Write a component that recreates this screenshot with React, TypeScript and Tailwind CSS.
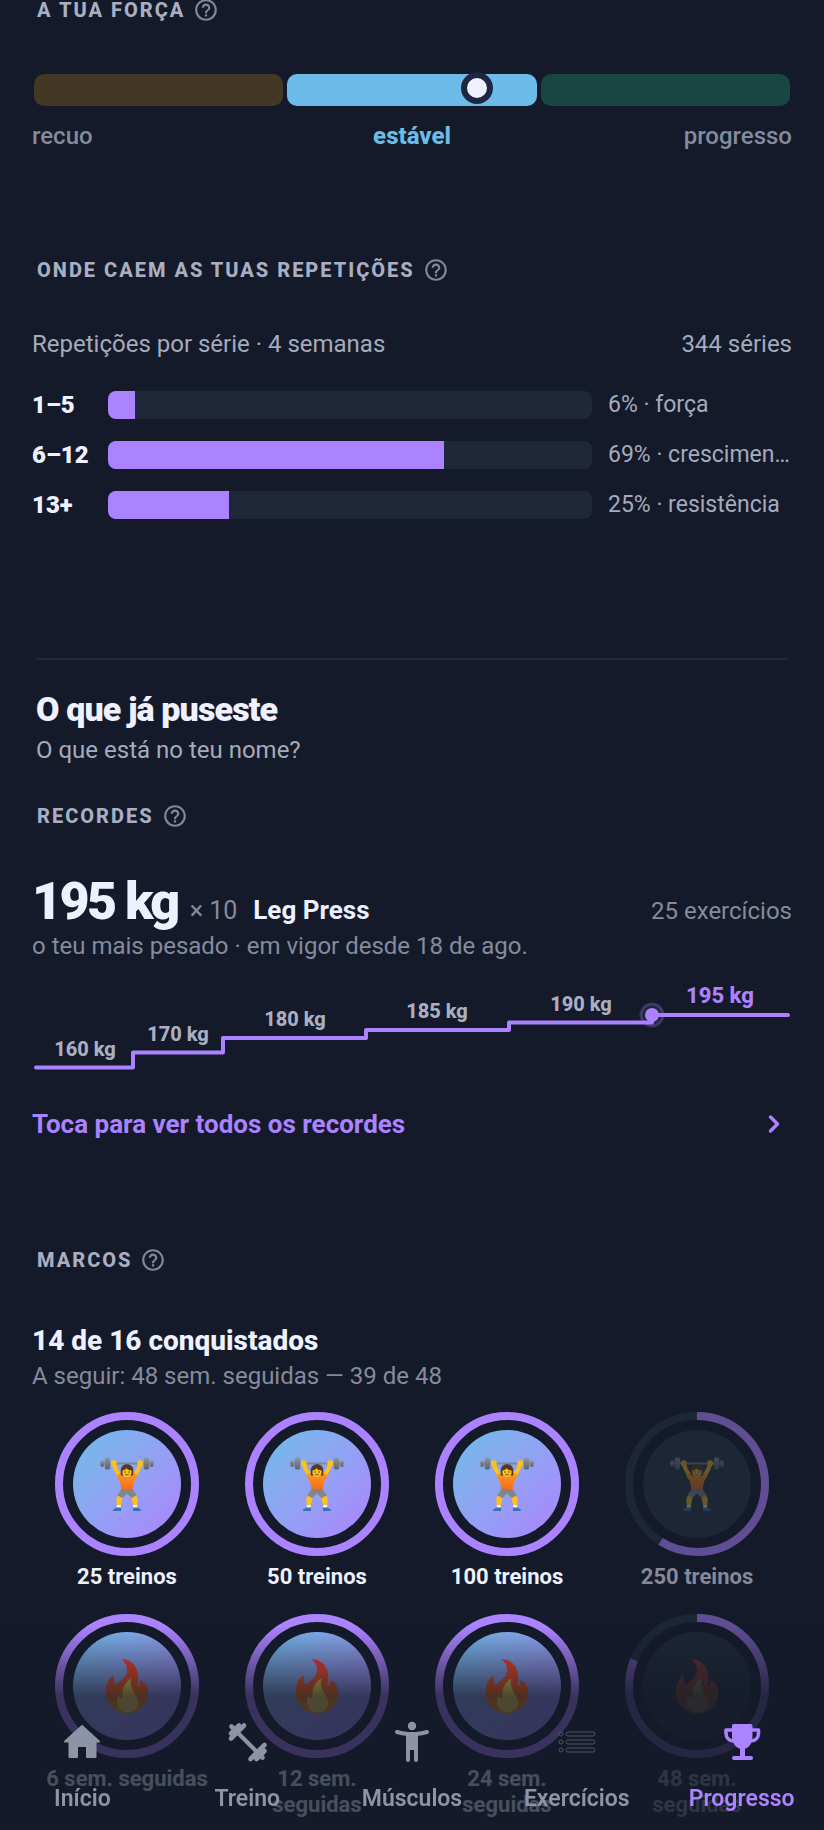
import React from 'react';
import { MdHelpOutline } from 'react-icons/md';
import { ChevronRight } from 'lucide-react';

type BadgeKind = 'lifter' | 'fire';

interface Badge {
  label: string;
  kind: BadgeKind;
  progress: number;
}

const REP_RANGES = [
  { range: '1–5', sets: 19, note: '6% · força' },
  { range: '6–12', sets: 239, note: '69% · crescimento' },
  { range: '13+', sets: 86, note: '25% · resistência' },
];

const TOTAL_SETS = 344;

const STEPS = [
  { label: '160 kg', x: 53, y: 76 },
  { label: '170 kg', x: 146, y: 61 },
  { label: '180 kg', x: 263, y: 46 },
  { label: '185 kg', x: 405, y: 38 },
  { label: '190 kg', x: 549, y: 31 },
];

const BADGES: Badge[] = [
  { label: '25 treinos', kind: 'lifter', progress: 1 },
  { label: '50 treinos', kind: 'lifter', progress: 1 },
  { label: '100 treinos', kind: 'lifter', progress: 1 },
  { label: '250 treinos', kind: 'lifter', progress: 0.59 },
  { label: '6 sem. seguidas', kind: 'fire', progress: 1 },
  { label: '12 sem. seguidas', kind: 'fire', progress: 1 },
  { label: '24 sem. seguidas', kind: 'fire', progress: 1 },
  { label: '48 sem. seguidas', kind: 'fire', progress: 39 / 48 },
];

const SectionLabel: React.FC<{ children: string }> = ({ children }) => (
  <div className="flex h-5 items-center gap-2 pl-[5px]">
    <h2 className="text-[20px] leading-5 font-extrabold tracking-widest text-[#a9afc1] uppercase">
      {children}
    </h2>
    <button type="button" aria-label="Ajuda" className="shrink-0 text-[#828899]">
      <MdHelpOutline size={26} />
    </button>
  </div>
);

const Lifter: React.FC = () => (
  <svg viewBox="0 0 54 54" className="size-[54px]" aria-hidden="true">
    <defs>
      <linearGradient id="shirt" x1="0" y1="0" x2="0" y2="1">
        <stop offset="0" stopColor="#ff9a1f" />
        <stop offset="1" stopColor="#f56a1c" />
      </linearGradient>
      <linearGradient id="plate" x1="0" y1="0" x2="0" y2="1">
        <stop offset="0" stopColor="#90979c" />
        <stop offset="1" stopColor="#5d6468" />
      </linearGradient>
    </defs>
    <path d="M1 6.6H53" stroke="#82898d" strokeWidth="2" strokeLinecap="round" />
    <g fill="url(#plate)">
      <rect x="0.5" y="3.4" width="3.4" height="6.6" rx="1.4" />
      <rect x="4.8" y="0.6" width="5.4" height="12" rx="2.2" />
      <rect x="50.1" y="3.4" width="3.4" height="6.6" rx="1.4" />
      <rect x="43.8" y="0.6" width="5.4" height="12" rx="2.2" />
    </g>
    <g fill="none" stroke="#fcc21b" strokeLinecap="round" strokeLinejoin="round">
      <path d="M14 7.5L15.6 12L20.5 20" strokeWidth="4.2" />
      <path d="M40 7.5L38.4 12L33.5 20" strokeWidth="4.2" />
    </g>
    <circle cx="13.8" cy="6.2" r="2.9" fill="#fcc21b" />
    <circle cx="40.2" cy="6.2" r="2.9" fill="#fcc21b" />
    <path
      d="M16 18.4L20.5 15.6L24 19.4H30L33.5 15.6L38 18.4L34 24.4L32.5 33H21.6L20 24.4Z"
      fill="url(#shirt)"
    />
    <path d="M20.8 18.4V13.2C20.8 9.4 23.4 7.2 27 7.2S33.2 9.4 33.2 13.2V18.4Z" fill="#543930" />
    <path
      d="M22.4 13.4C24.4 13.4 25.8 12.4 26.4 11.2C27.6 12.8 29.6 13.4 31.6 13.4V15.4C31.6 18.2 29.6 20 27 20S22.4 18.2 22.4 15.4Z"
      fill="#fcc21b"
    />
    <circle cx="25" cy="15" r="0.7" fill="#4a3a24" />
    <circle cx="29" cy="15" r="0.7" fill="#4a3a24" />
    <path d="M25.2 17.4Q27 18.6 28.8 17.4" stroke="#4a3a24" strokeWidth="0.8" fill="none" />
    <path d="M18.8 36.5L16.2 42L16.8 48.6H20.8L22.6 40.6L23.6 37.6Z" fill="#fcc21b" />
    <path d="M35.2 36.5L37.8 42L37.2 48.6H33.2L31.4 40.6L30.4 37.6Z" fill="#fcc21b" />
    <path d="M21.6 32H32.4L36.8 38.2L31.6 41L27 36.4L22.4 41L17.2 38.2Z" fill="#858585" />
    <path d="M16.8 48H20.8V51H16.8ZM33.2 48H37.2V51H33.2Z" fill="#f1f1f1" />
    <path
      d="M12.8 54C13 52 15.4 51.2 16.8 50.6H21V54ZM41.2 54C41 52 38.6 51.2 37.2 50.6H33V54Z"
      fill="#3f6fae"
    />
  </svg>
);

const Fire: React.FC = () => (
  <svg viewBox="0 0 54 54" className="size-[54px]" aria-hidden="true">
    <defs>
      <linearGradient id="flame" x1="0" y1="0" x2="0" y2="1">
        <stop offset="0" stopColor="#ff3a2e" />
        <stop offset="0.5" stopColor="#ff5a12" />
        <stop offset="1" stopColor="#ff9d00" />
      </linearGradient>
    </defs>
    <path
      d="M21.5 0.2C31 -0.4 39 8 38.3 19.5C38.2 22.5 37.2 25 37.8 27C39.6 27 40.8 24.6 39.4 21.4C45 21.6 48.4 27 48.2 33.5C48 46 38.6 54 27 54S5.8 46.5 5.8 33C5.8 26 8.2 19 14.2 16.2C13.6 19.2 13.4 22 15 25C17.4 25.4 20.4 22.6 24.4 18C28.8 12.8 27.6 4.4 21.5 0.2Z"
      fill="url(#flame)"
    />
    <path
      d="M31.2 19.4C26.4 22.2 20.6 28.4 22.8 39.4C21 39 19 38.4 17.8 36.6C16.4 40 16.8 45 18.4 48.4C20 51.6 23.4 53.2 27.4 53.2C33.6 53.2 38.2 49.4 38.2 43.6C38.2 36.4 29.2 32 31.2 19.4Z"
      fill="#fcd84a"
    />
  </svg>
);

const BadgeItem: React.FC<{ badge: Badge }> = ({ badge }) => {
  const done = badge.progress >= 1;
  return (
    <li className="flex flex-col items-center px-3">
      <div className={done ? 'relative size-36' : 'relative size-36 opacity-50'}>
        <svg viewBox="0 0 144 144" className="size-full -rotate-90" aria-hidden="true">
          <circle cx="72" cy="72" r="68" fill="none" stroke="#27323f" strokeWidth="8" />
          <circle
            cx="72"
            cy="72"
            r="68"
            fill="none"
            stroke="#ab82ff"
            strokeWidth="8"
            pathLength="100"
            strokeDasharray={`${badge.progress * 100} 100`}
          />
        </svg>
        <div
          className={
            done
              ? 'absolute inset-[18px] flex items-center justify-center rounded-full bg-linear-to-br from-[#6bbde8] to-[#ab82ff]'
              : 'absolute inset-[18px] flex items-center justify-center rounded-full bg-[#27323f]'
          }
        >
          <span className={done ? '' : 'opacity-70'}>
            {badge.kind === 'lifter' ? <Lifter /> : <Fire />}
          </span>
        </div>
      </div>
      <span
        className={
          done
            ? 'mt-2 text-center text-[22px] leading-[26px] font-bold text-[#eef1ff]'
            : 'mt-2 text-center text-[22px] leading-[26px] font-bold text-[#838999]'
        }
      >
        {badge.label}
      </span>
    </li>
  );
};

const HomeIcon: React.FC = () => (
  <svg viewBox="0 0 48 48" className="size-12" fill="currentColor" aria-hidden="true">
    <path
      d="M24 8L41 23.5H37.5V39H29V28H19V39H11.5V23.5H7Z"
      stroke="currentColor"
      strokeWidth="2"
      strokeLinejoin="round"
    />
  </svg>
);

const DumbbellIcon: React.FC = () => (
  <svg
    viewBox="0 0 48 48"
    className="size-12"
    fill="none"
    stroke="currentColor"
    strokeWidth="4"
    strokeLinecap="round"
    aria-hidden="true"
  >
    <path d="M14 14L34.5 34.5" />
    <path d="M8 20.5L21 7.5M8 15.5L16 7.5M8.5 8.5L12 12" strokeWidth="4.6" />
    <path d="M27.5 41L41.5 27M33.5 41L41.5 33M36 36L39.5 39.5" strokeWidth="4.6" />
  </svg>
);

const BodyIcon: React.FC = () => (
  <svg viewBox="0 0 48 48" className="size-12" fill="currentColor" aria-hidden="true">
    <circle cx="24" cy="8" r="4.2" />
    <path
      d="M9 14Q14 15.5 20 16V42M39 14Q34 15.5 28 16V42"
      fill="none"
      stroke="currentColor"
      strokeWidth="4"
      strokeLinecap="round"
      strokeLinejoin="round"
    />
    <path d="M18 14H30V32H18Z" />
  </svg>
);

const ListIcon: React.FC = () => (
  <svg viewBox="0 0 48 48" className="size-12 text-[#4d5464]" fill="none" stroke="currentColor" aria-hidden="true">
    {[16, 24, 32].map(y => (
      <g key={y}>
        <circle cx="8" cy={y} r="2" />
        <rect x="13" y={y - 2} width="29" height="4" rx="2" />
      </g>
    ))}
  </svg>
);

const TrophyIcon: React.FC = () => (
  <svg viewBox="0 0 48 48" className="size-12" fill="currentColor" aria-hidden="true">
    <path d="M15.5 6H32.5Q34.5 6 34.5 8V18C34.5 25 31 31 24.5 31S14 25 14 18V8Q14 6 15.5 6Z" />
    <path
      d="M14 12H8V15C8 19.5 11 23 16 23M34 12H40.5V15C40.5 19.5 37.5 23 32.5 23"
      fill="none"
      stroke="currentColor"
      strokeWidth="3.6"
      strokeLinejoin="round"
    />
    <rect x="22" y="29" width="5" height="11" />
    <rect x="14" y="38" width="21" height="4" rx="2" />
  </svg>
);

const NAV_ITEMS = [
  { label: 'Início', icon: <HomeIcon />, active: false },
  { label: 'Treino', icon: <DumbbellIcon />, active: false },
  { label: 'Músculos', icon: <BodyIcon />, active: false },
  { label: 'Exercícios', icon: <ListIcon />, active: false },
  { label: 'Progresso', icon: <TrophyIcon />, active: true },
];

const App: React.FC = () => {
  return (
    <div className="min-h-screen bg-[#141a29] font-['Roboto',sans-serif] text-[#eef1ff]">
      <main className="px-8 pb-2">
        {/* strength gauge */}
        <section>
          <SectionLabel>A tua força</SectionLabel>
          <div className="relative mx-0.5 mt-[54px] grid h-8 grid-cols-3 gap-1">
            <div className="rounded-[10px] bg-[#423823]" />
            <div className="rounded-[10px] bg-[#6bbce8]" />
            <div className="rounded-[10px] bg-[#184643]" />
            <div className="absolute -top-0.5 left-[58.6%] size-8 -translate-x-1/2 rounded-full border-6 border-[#1f2740] bg-[#eef1ff]" />
          </div>
          <div className="mt-3.5 grid grid-cols-3 text-[24px] leading-8 text-[#858b9d]">
            <span className="font-medium">recuo</span>
            <span className="text-center font-extrabold text-[#6bbce8]">estável</span>
            <span className="text-right font-medium">progresso</span>
          </div>
        </section>

        {/* rep ranges */}
        <section className="mt-[108px]">
          <SectionLabel>Onde caem as tuas repetições</SectionLabel>
          <div className="mt-12 flex justify-between text-[24px] leading-8 text-[#a5abbc]">
            <span>Repetições por série · 4 semanas</span>
            <span>344 séries</span>
          </div>
          <div className="mt-[31px] flex flex-col gap-[22px]">
            {REP_RANGES.map(r => (
              <div key={r.range} className="grid h-7 grid-cols-[60px_1fr_184px] items-center gap-4">
                <span className="text-[24px] leading-7 font-black whitespace-nowrap">{r.range}</span>
                <div className="h-7 overflow-hidden rounded-lg bg-[#1f2838]">
                  <div
                    className="h-full bg-[#ab82ff]"
                    style={{ width: `${(r.sets / TOTAL_SETS) * 100}%` }}
                  />
                </div>
                <span className="truncate text-[23px] leading-7 text-[#a5abbc]">{r.note}</span>
              </div>
            ))}
          </div>
        </section>

        <hr className="mx-1 mt-[139px] border-t-2 border-[#222938]" />

        <header className="mt-[29px] px-1">
          <h1 className="text-[34px] leading-10 font-black tracking-tight">O que já puseste</h1>
          <p className="mt-[5px] text-[24px] leading-8 text-[#a5abbc]">O que está no teu nome?</p>
        </header>

        {/* records */}
        <section className="mt-10">
          <SectionLabel>Recordes</SectionLabel>
          <div className="mt-12 flex items-baseline">
            <span className="text-[52px] leading-14 font-black tracking-tighter">195 kg</span>
            <span className="ml-3 text-[25px] leading-8 text-[#858b9d]">× 10</span>
            <span className="ml-4 text-[26px] leading-8 font-bold">Leg Press</span>
            <span className="ml-auto text-[24px] leading-8 text-[#858b9d]">25 exercícios</span>
          </div>
          <p className="text-[24px] leading-8 text-[#858b9d]">
            o teu mais pesado · em vigor desde 18 de ago.
          </p>
          <svg viewBox="0 0 760 100" className="mt-[18px] w-full font-extrabold" role="img" aria-label="Evolução do recorde">
            <path
              d="M4 87.5H101V72.5H191V58H334V50H477V42.5H620V35H756"
              fill="none"
              stroke="#ab82ff"
              strokeWidth="4"
              strokeLinecap="round"
              strokeLinejoin="round"
            />
            <circle cx="620" cy="35" r="11" fill="#ab82ff" fillOpacity="0.1" stroke="#ab82ff" strokeOpacity="0.25" strokeWidth="3" />
            <circle cx="620" cy="35" r="7" fill="#ab82ff" />
            {STEPS.map(s => (
              <text key={s.label} x={s.x} y={s.y} textAnchor="middle" className="fill-[#a9afc1] text-[20px]">
                {s.label}
              </text>
            ))}
            <text x="688" y="23" textAnchor="middle" className="fill-[#ab82ff] text-[22px]">
              195 kg
            </text>
          </svg>
          <button
            type="button"
            className="mt-7 flex w-full items-center justify-between text-[26px] leading-8 font-bold text-[#ab82ff]"
          >
            Toca para ver todos os recordes
            <ChevronRight size={28} strokeWidth={3} className="mr-1" />
          </button>
        </section>

        {/* milestones */}
        <section className="mt-[110px]">
          <SectionLabel>Marcos</SectionLabel>
          <h3 className="mt-[55px] text-[28px] leading-8 font-extrabold">14 de 16 conquistados</h3>
          <p className="mt-[3px] text-[24px] leading-8 text-[#858b9d]">
            A seguir: 48 sem. seguidas — 39 de 48
          </p>
          <ul className="mt-5 grid grid-cols-4 gap-y-6">
            {BADGES.map(b => (
              <BadgeItem key={b.label} badge={b} />
            ))}
          </ul>
        </section>
      </main>

      {/* bottom bar fades the list out underneath */}
      <nav className="fixed inset-x-0 bottom-0 grid grid-cols-5 bg-linear-to-b from-[#141a29]/0 from-6% to-[#141a29]/76 to-38% pt-26 pb-[17px]">
        {NAV_ITEMS.map(item => (
          <a
            key={item.label}
            href="#"
            aria-current={item.active ? 'page' : undefined}
            className={
              item.active
                ? 'flex flex-col items-center gap-[19px] text-[23px] leading-7 font-semibold text-[#ab82ff]'
                : 'flex flex-col items-center gap-[19px] text-[23px] leading-7 font-semibold text-[#8e94a8]'
            }
          >
            {item.icon}
            {item.label}
          </a>
        ))}
      </nav>
    </div>
  );
};

export default App;
